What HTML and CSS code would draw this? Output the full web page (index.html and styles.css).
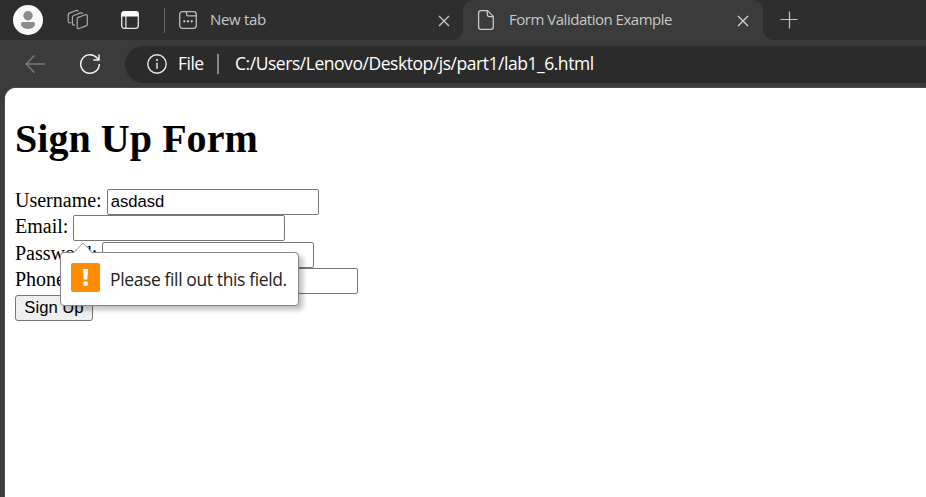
FILE: index.html
```html
<!DOCTYPE html>
<html lang="en">
<head>
<meta charset="utf-8">
<title>Form Validation Example</title>
<link rel="stylesheet" href="styles.css">
</head>
<body>
<div class="browser">
  <header class="tabstrip">
    <div class="tools">
      <svg class="avatar" width="30" height="30" viewBox="0 0 30 30"><circle cx="15" cy="15" r="15" fill="#fafafa"/><circle cx="15" cy="10.8" r="4.700" fill="#8c8c8c"/><path d="M9.800 17h10.400q1.800 0 1.800 1.800c0 3.200-3 5.200-7 5.200s-7-2-7-5.200q0-1.800 1.800-1.800z" fill="#8c8c8c"/></svg>
      <svg class="workspaces" width="22" height="22" viewBox="0 0 22 22"><g fill="none" stroke="#aaa" stroke-width="1.200" stroke-linejoin="round" stroke-linecap="round"><path d="M10.500 8.600l7.900-2.900q1.900-.6 1.900 1.300v8.200q0 1.300-1.200 1.700l-7 2.600q-1.900.6-1.900-1.200V9.800q0-.8.700-1.200z"/><path d="M7.500 15.900l-1.200.3q-.9-.3-.9-1.600V8.200q0-1.200 1.200-1.700l7-2.600q1.600-.5 2 .6"/><path d="M3.500 13.600l-1.300.2q-1-.4-1-1.600V5.700q0-1.200 1.200-1.600L9 1.500q1.500-.5 2 .6"/></g></svg>
      <svg class="vertical" width="20" height="20" viewBox="0 0 20 20"><rect x="1.700" y="1.700" width="16.600" height="16.600" rx="2.500" fill="none" stroke="#e8e8e8" stroke-width="1.300"/><path d="M1.500 6.500V3.500q0-2.200 2.200-2.200h12.600q2.200 0 2.200 2.200v3z" fill="#fff"/><path d="M5.900 6v12" stroke="#e8e8e8" stroke-width="1.200"/></svg>
      <span class="divider"></span>
    </div>
    <div class="tab">
      <svg width="20" height="20" viewBox="0 0 20 20" fill="none" stroke="#bbb" stroke-width="1.300"><rect x="1.700" y="1.700" width="16.600" height="16.600" rx="2.700"/><path d="M8.500 2v2.200q0 1.600 1.600 1.600H18"/><g fill="#d8d8d8" stroke="none"><circle cx="6.300" cy="11.300" r="1.150"/><circle cx="10" cy="11.300" r="1.150"/><circle cx="13.700" cy="11.300" r="1.150"/></g></svg>
      <span class="label new">New tab</span>
      <svg class="close" width="12" height="12" viewBox="0 0 12 12"><path d="M1 1l10 10M11 1L1 11" stroke="#c6c6c6" stroke-width="1.300"/></svg>
    </div>
    <div class="tab active">
      <svg width="18" height="22" viewBox="0 0 18 22" fill="none" stroke="#c8c8c8" stroke-width="1.300" stroke-linejoin="round"><path d="M4 1.600h6.500L16.300 7.400V18q0 2.400-2.400 2.400H4Q1.600 20.400 1.600 18V4Q1.600 1.600 4 1.600z"/><path d="M10.300 1.800v4q0 1.800 1.800 1.800h4"/></svg>
      <span class="label page">Form Validation Example</span>
      <svg class="close" width="12" height="12" viewBox="0 0 12 12"><path d="M1 1l10 10M11 1L1 11" stroke="#d5d5d5" stroke-width="1.300"/></svg>
    </div>
    <div class="newtab"><svg width="18" height="18" viewBox="0 0 18 18"><path d="M9.500 .5v17M.5 8.500h17" stroke="#c6c6c6" stroke-width="1.200"/></svg></div>
  </header>
  <nav class="toolbar">
    <svg class="back" width="22" height="20" viewBox="0 0 22 20" fill="none" stroke="#7d7d7d" stroke-width="1.400"><path d="M10.500 1.500L2 10l8.500 8.500M2 10h19"/></svg>
    <svg class="reload" width="22" height="22" viewBox="0 0 22 22" fill="none" stroke="#f2f2f2" stroke-width="1.500"><path d="M20.300 11a9.300 9.300 0 1 1-2.200-6l1.900 2M20 1.500V7h-5.700"/></svg>
    <div class="address">
      <svg width="20" height="20" viewBox="0 0 20 20"><circle cx="10" cy="10" r="9.200" fill="none" stroke="#e8e8e8" stroke-width="1.400"/><path d="M10 8.700v6" stroke="#f2f2f2" stroke-width="1.400"/><circle cx="10" cy="6" r="1" fill="#f2f2f2"/></svg>
      <span class="scheme">File</span>
      <span class="bar"></span>
      <span class="url">C:/Users/Lenovo/Desktop/js/part1/lab1_6.html</span>
    </div>
  </nav>
  <main class="document">
    <h1>Sign Up Form</h1>
    <form>
      <div class="row"><label for="username">Username:</label><input id="username" type="text" value="asdasd"></div>
      <div class="row email"><label for="email">Email:</label><input id="email" type="text">
        <div class="bubble" role="alert">
          <svg class="pointer" width="22" height="12" viewBox="0 0 22 12"><path d="M1 12L11 1.200 21 12z" fill="#fff"/><path d="M1 11.200L11 1.200l10 10" fill="none" stroke="#999"/></svg>
          <svg width="29" height="29" viewBox="0 0 29 29"><rect width="29" height="29" rx="2" fill="#ff8c00"/><path d="M12 6h5l-.7 10.500h-3.600z" fill="#fff"/><circle cx="14.500" cy="20.700" r="2.400" fill="#fff"/></svg>
          <span class="message">Please fill out this field.</span>
        </div>
      </div>
      <div class="row"><label for="password">Password:</label><input id="password" type="password"></div>
      <div class="row"><label for="phone">Phone Number:</label><input id="phone" type="text"></div>
      <button type="button">Sign Up</button>
    </form>
  </main>
</div>
</body>
</html>
```
FILE: styles.css
```css
* { box-sizing: border-box; }
body { margin: 0; overflow: hidden; }
svg { display: block; flex: none; }
.browser {
  height: 497px;
  display: flex;
  flex-direction: column;
  background: #3b3b3b;
  font-family: "Open Sans", sans-serif;
}
.tabstrip { height: 40px; display: flex; flex: none; background: linear-gradient(#2e2e2e 20px, #3b3b3b 20px); }
.tools { width: 166px; display: flex; align-items: center; background: #2e2e2e; padding-left: 13px; }
.workspaces { margin-left: 24px; }
.vertical { margin-left: 31px; }
.divider { width: 1px; height: 25px; margin-left: 24px; background: #666; }
.tab {
  width: 297px;
  display: flex;
  align-items: center;
  padding: 0 13px 0 12px;
  background: #2e2e2e;
  border-bottom-right-radius: 11px;
  color: #c8c8c8;
}
.tab.active {
  width: 300px;
  padding: 0 14px;
  background: #3b3b3b;
  border-radius: 11px 11px 0 0;
}
.label { font-size: 15px; line-height: 20px; padding-bottom: 2px; white-space: nowrap; }
.new { margin-left: 12px; letter-spacing: -0.3px; }
.page { margin-left: 14px; letter-spacing: -0.48px; }
.close { margin-left: auto; margin-top: 1px; }
.newtab { flex: 1; display: flex; align-items: center; padding-left: 17px; background: #2e2e2e; border-bottom-left-radius: 11px; }
.toolbar { height: 48px; flex: none; display: flex; align-items: center; padding-left: 24px; }
.reload { margin-left: 33px; }
.address {
  flex: 1;
  height: 37px;
  margin-left: 24px;
  padding-left: 22px;
  display: flex;
  align-items: center;
  background: #2b2b2b;
  border-radius: 19px 0 0 19px;
  color: #fff;
  font-size: 17.5px;
  white-space: nowrap;
}
.scheme { width: 27px; margin-left: 11px; padding-bottom: 2px; letter-spacing: -0.5px; }
.bar { width: 2px; height: 20px; margin-left: 12px; background: #858585; }
.url { margin-left: 16px; padding-bottom: 2px; letter-spacing: -0.46px; }
.document {
  flex: 1;
  margin-left: 5px;
  padding: 28px 10px 0;
  background: #fff;
  border-radius: 11px 0 0 0;
  box-shadow: 0 0 1px #ddd;
  font-family: "Liberation Serif", serif;
  font-size: 20px;
  color: #000;
}
h1 { margin: 0 0 27px; font-size: 40px; line-height: 46px; letter-spacing: 0.05px; }
.row { height: 26.4px; display: flex; align-items: flex-start; gap: 5px; }
.row label { line-height: 22px; white-space: nowrap; }
input {
  width: 212px;
  height: 26px;
  padding: 1px 3px;
  border: 1px solid #767676;
  border-radius: 2px;
  background: #fff;
  font: 16.67px "Liberation Sans", sans-serif;
}
button {
  display: block;
  width: 78px;
  height: 26px;
  padding: 0;
  border: 1px solid #767676;
  border-radius: 3px;
  background: #efefef;
  color: #000;
  font: 16.67px "Liberation Sans", sans-serif;
}
.email { position: relative; }
.bubble {
  position: absolute;
  left: 45px;
  top: 37px;
  width: 239px;
  height: 54px;
  padding: 0 10px 3px;
  display: flex;
  align-items: center;
  background: #fff;
  border: 1px solid #858585;
  border-radius: 4px;
  box-shadow: 4px 4px 5px rgba(0, 0, 0, 0.25);
  z-index: 1;
}
.pointer { position: absolute; left: 11px; top: -11px; }
.message {
  margin-left: 10px;
  padding-top: 3px;
  font-family: "Open Sans", sans-serif;
  font-size: 17.5px;
  letter-spacing: -0.38px;
  color: #222;
  white-space: nowrap;
}
```
